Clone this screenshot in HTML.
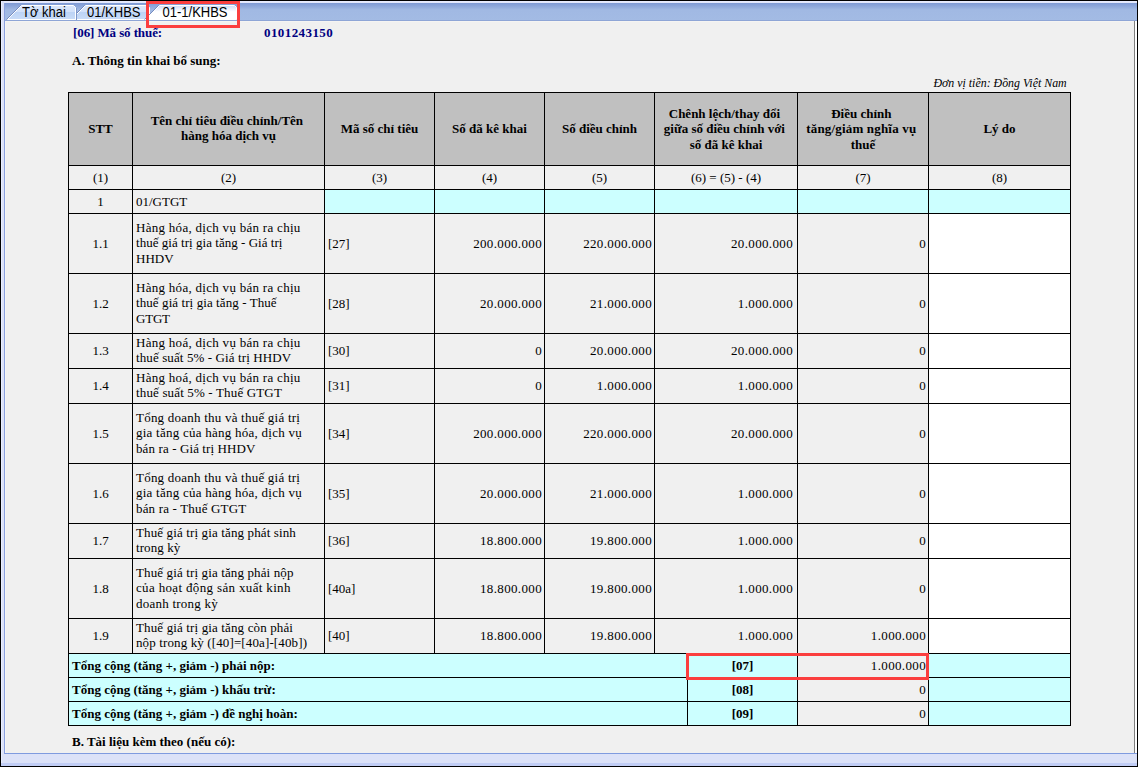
<!DOCTYPE html>
<html><head><meta charset="utf-8"><title>01-1/KHBS</title>
<style>
html,body{margin:0;padding:0}
body{width:1138px;height:767px;overflow:hidden;background:#000;position:relative;font-family:"Liberation Serif",serif;font-size:13px;color:#000}
#frame{position:absolute;left:1px;top:1px;width:1136px;height:765px;background:#dce2f8;overflow:hidden}
#tabbar{position:absolute;left:3px;top:0;width:1133px;height:20px;background:linear-gradient(#e8ecfd 0px,#dfe5fb 2px,#7f9ad4 2px,#8ca6da 5px,#a1b9e3 9px,#a3bbe4 20px)}
#content{position:absolute;left:3px;top:19px;width:1133px;height:732px;background:#f0f0f0;border-left:1px solid #8ba1e0;border-top:1px solid #8ea5d6;border-bottom:1px solid #7f9bdf}
#rline{position:absolute;left:1133px;top:20px;width:1px;height:732px;background:#808080}
#rwhite{position:absolute;left:1134px;top:20px;width:2px;height:732px;background:#fff}
#botband{position:absolute;left:0;top:762px;width:1136px;height:3px;background:#c1cdf5}
.tab{position:absolute;top:4px;height:16px;font-family:"Liberation Sans",sans-serif;font-size:13px;line-height:16px;color:#000}
.tab svg{position:absolute;left:0;top:0}
.tab span{position:absolute;top:0;white-space:nowrap;transform:scaleY(1.07);transform-origin:0 12.5px}
#tbl{position:absolute;left:68px;top:92px;width:1003px;height:634px;background:#000}
.c{position:absolute;display:flex;align-items:center;box-sizing:border-box;line-height:15px;overflow:hidden;white-space:nowrap}
.c span{display:block;width:100%}
.ln{display:block;font-style:normal}
.r .ln{letter-spacing:0.35px}
.l3{position:relative;top:1px}
.h{font-weight:bold;text-align:center;justify-content:center}
.m{text-align:center}
.l{text-align:left;padding-left:3px}
.h span,.ml span,.u span{position:relative;top:-1px}
.r.r6{padding-right:4px}
.r{text-align:right;padding-right:2px}
.b{font-weight:bold}
.t{position:absolute;white-space:nowrap;line-height:15px}
.red{position:absolute;border:3px solid #fb3e3e;box-sizing:border-box}
</style></head><body>
<div id="frame">
<div id="tabbar"></div><div style="position:absolute;left:3px;top:2px;width:1px;height:751px;background:#8ba1e0"></div>
<div id="content"></div>
<div style="position:absolute;left:0;top:0;width:1px;height:765px;background:#e8edff"></div><div style="position:absolute;left:4px;top:20px;width:1px;height:732px;background:#f6f5f3"></div><div style="position:absolute;left:4px;top:20px;width:1129px;height:1px;background:#f5f4f2"></div><div id="rline"></div><div id="rwhite"></div>
<div id="botband"></div>
<svg id="tabs" width="1138" height="22" viewBox="0 0 1138 22" style="position:absolute;left:-1px;top:-1px">
<defs>
<linearGradient id="gi" x1="0" y1="0" x2="0" y2="1" gradientUnits="objectBoundingBox">
<stop offset="0" stop-color="#dbe7fb"/><stop offset="0.46" stop-color="#d2e1fa"/><stop offset="0.46" stop-color="#bcd3f5"/><stop offset="1" stop-color="#c9dcf8"/>
</linearGradient>
<linearGradient id="ga" x1="0" y1="0" x2="0" y2="1" gradientUnits="objectBoundingBox">
<stop offset="0" stop-color="#cfdcf7"/><stop offset="0.45" stop-color="#ffffff"/><stop offset="1" stop-color="#ffffff"/>
</linearGradient>
</defs>
<!-- tab2 -->
<path d="M70.5,19.5 L84.5,5.5" stroke="#768cbf" stroke-width="1" fill="none"/>
<path d="M71.5,19.5 L85.5,5.5 L147.5,5.5 L149.5,7.5 L149.5,19.5 Z" fill="url(#gi)" stroke="#ffffff" stroke-width="1"/>
<!-- tab1 -->
<path d="M6.5,19.5 L20.5,5.5" stroke="#768cbf" stroke-width="1" fill="none"/>
<path d="M7.5,19.5 L21.5,5.5 L73.5,5.5 L75.5,7.5 L75.5,19.5 Z" fill="url(#gi)" stroke="#ffffff" stroke-width="1"/>
<path d="M76.5,8 L76.5,20" stroke="#7d96c9" stroke-width="1" fill="none"/>
<!-- tab3 active -->
<path d="M144.5,19.5 L158.5,5.5" stroke="#768cbf" stroke-width="1" fill="none"/>
<path d="M145.5,19.5 L159.5,5.5 L234.5,5.5 L236.5,7.5 L236.5,19.5 Z" fill="url(#ga)" stroke="#ffffff" stroke-width="1"/>
</svg>
<div class="tab" style="left:21px"><span>Tờ khai</span></div>
<div class="tab" style="left:86px"><span>01/KHBS</span></div>
<div class="tab" style="left:161.5px"><span>01-1/KHBS</span></div>
</div>
<div class="t b" style="left:73px;top:25px;color:#000080;font-weight:bold;letter-spacing:-0.1px">[06] Mã số thuế:</div>
<div class="t b" style="left:264px;top:25px;color:#000080;font-weight:bold;letter-spacing:0.42px">0101243150</div>
<div class="t b" style="left:72px;top:53px;font-weight:bold">A. Thông tin khai bổ sung:</div>
<div class="t" style="right:71px;top:75px;font-style:italic;transform:scaleX(0.915);transform-origin:100% 50%">Đơn vị tiền: Đồng Việt Nam</div>
<div class="t b" style="left:72px;top:734px;font-weight:bold">B. Tài liệu kèm theo (nếu có):</div>
<div id="tbl"></div>
<div class="c h" style="left:69px;top:93px;width:63px;height:72px;background:#c0c0c0"><span><i class="ln">STT</i></span></div>
<div class="c h" style="left:133px;top:93px;width:191px;height:72px;background:#c0c0c0"><span><i class="ln">Tên chỉ tiêu điều chỉnh/Tên&nbsp;</i><i class="ln">hàng hóa dịch vụ</i></span></div>
<div class="c h" style="left:325px;top:93px;width:109px;height:72px;background:#c0c0c0"><span><i class="ln">Mã số chỉ tiêu</i></span></div>
<div class="c h" style="left:435px;top:93px;width:109px;height:72px;background:#c0c0c0"><span><i class="ln">Số đã kê khai</i></span></div>
<div class="c h" style="left:545px;top:93px;width:109px;height:72px;background:#c0c0c0"><span><i class="ln">Số điều chỉnh</i></span></div>
<div class="c h" style="left:655px;top:93px;width:142px;height:72px;background:#c0c0c0"><span><i class="ln">Chênh lệch/thay đổi&nbsp;</i><i class="ln">giữa số điều chỉnh với&nbsp;</i><i class="ln l3">số đã kê khai</i></span></div>
<div class="c h" style="left:798px;top:93px;width:130px;height:72px;background:#c0c0c0"><span><i class="ln">Điều chỉnh&nbsp;</i><i class="ln" style="letter-spacing:0.18px">tăng/giảm nghĩa vụ&nbsp;</i><i class="ln l3">thuế</i></span></div>
<div class="c h" style="left:929px;top:93px;width:141px;height:72px;background:#c0c0c0"><span><i class="ln">Lý do</i></span></div>
<div class="c m" style="left:69px;top:166px;width:63px;height:23px;background:#f0f0f0"><span><i class="ln">(1)</i></span></div>
<div class="c m" style="left:133px;top:166px;width:191px;height:23px;background:#f0f0f0"><span><i class="ln">(2)</i></span></div>
<div class="c m" style="left:325px;top:166px;width:109px;height:23px;background:#f0f0f0"><span><i class="ln">(3)</i></span></div>
<div class="c m" style="left:435px;top:166px;width:109px;height:23px;background:#f0f0f0"><span><i class="ln">(4)</i></span></div>
<div class="c m" style="left:545px;top:166px;width:109px;height:23px;background:#f0f0f0"><span><i class="ln">(5)</i></span></div>
<div class="c m" style="left:655px;top:166px;width:142px;height:23px;background:#f0f0f0"><span><i class="ln">(6) = (5) - (4)</i></span></div>
<div class="c m" style="left:798px;top:166px;width:130px;height:23px;background:#f0f0f0"><span><i class="ln">(7)</i></span></div>
<div class="c m" style="left:929px;top:166px;width:141px;height:23px;background:#f0f0f0"><span><i class="ln">(8)</i></span></div>
<div class="c m" style="left:69px;top:190px;width:63px;height:23px;background:#f0f0f0"><span><i class="ln">1</i></span></div>
<div class="c l" style="left:133px;top:190px;width:191px;height:23px;background:#f0f0f0"><span><i class="ln">01/GTGT</i></span></div>
<div class="c " style="left:325px;top:190px;width:109px;height:23px;background:#ccffff"><span></span></div>
<div class="c " style="left:435px;top:190px;width:109px;height:23px;background:#ccffff"><span></span></div>
<div class="c " style="left:545px;top:190px;width:109px;height:23px;background:#ccffff"><span></span></div>
<div class="c " style="left:655px;top:190px;width:142px;height:23px;background:#ccffff"><span></span></div>
<div class="c " style="left:798px;top:190px;width:130px;height:23px;background:#ccffff"><span></span></div>
<div class="c " style="left:929px;top:190px;width:141px;height:23px;background:#ccffff"><span></span></div>
<div class="c m" style="left:69px;top:214px;width:63px;height:59px;background:#f0f0f0"><span><i class="ln">1.1</i></span></div>
<div class="c l ml" style="left:133px;top:214px;width:191px;height:59px;background:#f0f0f0"><span><i class="ln" style="letter-spacing:0.286px">Hàng hóa, dịch vụ bán ra chịu</i><i class="ln" style="letter-spacing:0.033px">thuế giá trị gia tăng - Giá trị</i><i class="ln l3" style="letter-spacing:0.035px">HHDV</i></span></div>
<div class="c l" style="left:325px;top:214px;width:109px;height:59px;background:#f0f0f0"><span><i class="ln">[27]</i></span></div>
<div class="c r" style="left:435px;top:214px;width:109px;height:59px;background:#f0f0f0"><span><i class="ln">200.000.000</i></span></div>
<div class="c r" style="left:545px;top:214px;width:109px;height:59px;background:#f0f0f0"><span><i class="ln">220.000.000</i></span></div>
<div class="c r r6" style="left:655px;top:214px;width:142px;height:59px;background:#f0f0f0"><span><i class="ln">20.000.000</i></span></div>
<div class="c r" style="left:798px;top:214px;width:130px;height:59px;background:#f0f0f0"><span><i class="ln">0</i></span></div>
<div class="c " style="left:929px;top:214px;width:141px;height:59px;background:#ffffff"><span></span></div>
<div class="c m" style="left:69px;top:274px;width:63px;height:59px;background:#f0f0f0"><span><i class="ln">1.2</i></span></div>
<div class="c l ml" style="left:133px;top:274px;width:191px;height:59px;background:#f0f0f0"><span><i class="ln" style="letter-spacing:0.286px">Hàng hóa, dịch vụ bán ra chịu</i><i class="ln" style="letter-spacing:0.083px">thuế giá trị gia tăng - Thuế</i><i class="ln l3" style="letter-spacing:-0.218px">GTGT</i></span></div>
<div class="c l" style="left:325px;top:274px;width:109px;height:59px;background:#f0f0f0"><span><i class="ln">[28]</i></span></div>
<div class="c r" style="left:435px;top:274px;width:109px;height:59px;background:#f0f0f0"><span><i class="ln">20.000.000</i></span></div>
<div class="c r" style="left:545px;top:274px;width:109px;height:59px;background:#f0f0f0"><span><i class="ln">21.000.000</i></span></div>
<div class="c r r6" style="left:655px;top:274px;width:142px;height:59px;background:#f0f0f0"><span><i class="ln">1.000.000</i></span></div>
<div class="c r" style="left:798px;top:274px;width:130px;height:59px;background:#f0f0f0"><span><i class="ln">0</i></span></div>
<div class="c " style="left:929px;top:274px;width:141px;height:59px;background:#ffffff"><span></span></div>
<div class="c m u" style="left:69px;top:334px;width:63px;height:34px;background:#f0f0f0"><span><i class="ln">1.3</i></span></div>
<div class="c l ml" style="left:133px;top:334px;width:191px;height:34px;background:#f0f0f0"><span><i class="ln" style="letter-spacing:0.286px">Hàng hoá, dịch vụ bán ra chịu</i><i class="ln" style="letter-spacing:0.109px">thuế suất 5% - Giá trị HHDV</i></span></div>
<div class="c l u" style="left:325px;top:334px;width:109px;height:34px;background:#f0f0f0"><span><i class="ln">[30]</i></span></div>
<div class="c r u" style="left:435px;top:334px;width:109px;height:34px;background:#f0f0f0"><span><i class="ln">0</i></span></div>
<div class="c r u" style="left:545px;top:334px;width:109px;height:34px;background:#f0f0f0"><span><i class="ln">20.000.000</i></span></div>
<div class="c r r6 u" style="left:655px;top:334px;width:142px;height:34px;background:#f0f0f0"><span><i class="ln">20.000.000</i></span></div>
<div class="c r u" style="left:798px;top:334px;width:130px;height:34px;background:#f0f0f0"><span><i class="ln">0</i></span></div>
<div class="c  u" style="left:929px;top:334px;width:141px;height:34px;background:#ffffff"><span></span></div>
<div class="c m u" style="left:69px;top:369px;width:63px;height:34px;background:#f0f0f0"><span><i class="ln">1.4</i></span></div>
<div class="c l ml" style="left:133px;top:369px;width:191px;height:34px;background:#f0f0f0"><span><i class="ln" style="letter-spacing:0.286px">Hàng hoá, dịch vụ bán ra chịu</i><i class="ln" style="letter-spacing:0.151px">thuế suất 5% - Thuế GTGT</i></span></div>
<div class="c l u" style="left:325px;top:369px;width:109px;height:34px;background:#f0f0f0"><span><i class="ln">[31]</i></span></div>
<div class="c r u" style="left:435px;top:369px;width:109px;height:34px;background:#f0f0f0"><span><i class="ln">0</i></span></div>
<div class="c r u" style="left:545px;top:369px;width:109px;height:34px;background:#f0f0f0"><span><i class="ln">1.000.000</i></span></div>
<div class="c r r6 u" style="left:655px;top:369px;width:142px;height:34px;background:#f0f0f0"><span><i class="ln">1.000.000</i></span></div>
<div class="c r u" style="left:798px;top:369px;width:130px;height:34px;background:#f0f0f0"><span><i class="ln">0</i></span></div>
<div class="c  u" style="left:929px;top:369px;width:141px;height:34px;background:#ffffff"><span></span></div>
<div class="c m" style="left:69px;top:404px;width:63px;height:59px;background:#f0f0f0"><span><i class="ln">1.5</i></span></div>
<div class="c l ml" style="left:133px;top:404px;width:191px;height:59px;background:#f0f0f0"><span><i class="ln" style="letter-spacing:0.223px">Tổng doanh thu và thuế giá trị</i><i class="ln" style="letter-spacing:0.247px">gia tăng của hàng hóa, dịch vụ</i><i class="ln l3" style="letter-spacing:0.108px">bán ra - Giá trị HHDV</i></span></div>
<div class="c l" style="left:325px;top:404px;width:109px;height:59px;background:#f0f0f0"><span><i class="ln">[34]</i></span></div>
<div class="c r" style="left:435px;top:404px;width:109px;height:59px;background:#f0f0f0"><span><i class="ln">200.000.000</i></span></div>
<div class="c r" style="left:545px;top:404px;width:109px;height:59px;background:#f0f0f0"><span><i class="ln">220.000.000</i></span></div>
<div class="c r r6" style="left:655px;top:404px;width:142px;height:59px;background:#f0f0f0"><span><i class="ln">20.000.000</i></span></div>
<div class="c r" style="left:798px;top:404px;width:130px;height:59px;background:#f0f0f0"><span><i class="ln">0</i></span></div>
<div class="c " style="left:929px;top:404px;width:141px;height:59px;background:#ffffff"><span></span></div>
<div class="c m" style="left:69px;top:464px;width:63px;height:59px;background:#f0f0f0"><span><i class="ln">1.6</i></span></div>
<div class="c l ml" style="left:133px;top:464px;width:191px;height:59px;background:#f0f0f0"><span><i class="ln" style="letter-spacing:0.223px">Tổng doanh thu và thuế giá trị</i><i class="ln" style="letter-spacing:0.247px">gia tăng của hàng hóa, dịch vụ</i><i class="ln l3" style="letter-spacing:0.17px">bán ra - Thuế GTGT</i></span></div>
<div class="c l" style="left:325px;top:464px;width:109px;height:59px;background:#f0f0f0"><span><i class="ln">[35]</i></span></div>
<div class="c r" style="left:435px;top:464px;width:109px;height:59px;background:#f0f0f0"><span><i class="ln">20.000.000</i></span></div>
<div class="c r" style="left:545px;top:464px;width:109px;height:59px;background:#f0f0f0"><span><i class="ln">21.000.000</i></span></div>
<div class="c r r6" style="left:655px;top:464px;width:142px;height:59px;background:#f0f0f0"><span><i class="ln">1.000.000</i></span></div>
<div class="c r" style="left:798px;top:464px;width:130px;height:59px;background:#f0f0f0"><span><i class="ln">0</i></span></div>
<div class="c " style="left:929px;top:464px;width:141px;height:59px;background:#ffffff"><span></span></div>
<div class="c m u" style="left:69px;top:524px;width:63px;height:34px;background:#f0f0f0"><span><i class="ln">1.7</i></span></div>
<div class="c l ml" style="left:133px;top:524px;width:191px;height:34px;background:#f0f0f0"><span><i class="ln" style="letter-spacing:0.13px">Thuế giá trị gia tăng phát sinh</i><i class="ln" style="letter-spacing:0.087px">trong kỳ</i></span></div>
<div class="c l u" style="left:325px;top:524px;width:109px;height:34px;background:#f0f0f0"><span><i class="ln">[36]</i></span></div>
<div class="c r u" style="left:435px;top:524px;width:109px;height:34px;background:#f0f0f0"><span><i class="ln">18.800.000</i></span></div>
<div class="c r u" style="left:545px;top:524px;width:109px;height:34px;background:#f0f0f0"><span><i class="ln">19.800.000</i></span></div>
<div class="c r r6 u" style="left:655px;top:524px;width:142px;height:34px;background:#f0f0f0"><span><i class="ln">1.000.000</i></span></div>
<div class="c r u" style="left:798px;top:524px;width:130px;height:34px;background:#f0f0f0"><span><i class="ln">0</i></span></div>
<div class="c  u" style="left:929px;top:524px;width:141px;height:34px;background:#ffffff"><span></span></div>
<div class="c m" style="left:69px;top:559px;width:63px;height:59px;background:#f0f0f0"><span><i class="ln">1.8</i></span></div>
<div class="c l ml" style="left:133px;top:559px;width:191px;height:59px;background:#f0f0f0"><span><i class="ln" style="letter-spacing:0.127px">Thuế giá trị gia tăng phải nộp</i><i class="ln" style="letter-spacing:0.344px">của hoạt động sản xuất kinh</i><i class="ln l3" style="letter-spacing:0.227px">doanh trong kỳ</i></span></div>
<div class="c l" style="left:325px;top:559px;width:109px;height:59px;background:#f0f0f0"><span><i class="ln">[40a]</i></span></div>
<div class="c r" style="left:435px;top:559px;width:109px;height:59px;background:#f0f0f0"><span><i class="ln">18.800.000</i></span></div>
<div class="c r" style="left:545px;top:559px;width:109px;height:59px;background:#f0f0f0"><span><i class="ln">19.800.000</i></span></div>
<div class="c r r6" style="left:655px;top:559px;width:142px;height:59px;background:#f0f0f0"><span><i class="ln">1.000.000</i></span></div>
<div class="c r" style="left:798px;top:559px;width:130px;height:59px;background:#f0f0f0"><span><i class="ln">0</i></span></div>
<div class="c " style="left:929px;top:559px;width:141px;height:59px;background:#ffffff"><span></span></div>
<div class="c m u" style="left:69px;top:619px;width:63px;height:34px;background:#f0f0f0"><span><i class="ln">1.9</i></span></div>
<div class="c l ml" style="left:133px;top:619px;width:191px;height:34px;background:#f0f0f0"><span><i class="ln" style="letter-spacing:0.135px">Thuế giá trị gia tăng còn phải</i><i class="ln" style="letter-spacing:0.124px">nộp trong kỳ ([40]=[40a]-[40b])</i></span></div>
<div class="c l u" style="left:325px;top:619px;width:109px;height:34px;background:#f0f0f0"><span><i class="ln">[40]</i></span></div>
<div class="c r u" style="left:435px;top:619px;width:109px;height:34px;background:#f0f0f0"><span><i class="ln">18.800.000</i></span></div>
<div class="c r u" style="left:545px;top:619px;width:109px;height:34px;background:#f0f0f0"><span><i class="ln">19.800.000</i></span></div>
<div class="c r r6 u" style="left:655px;top:619px;width:142px;height:34px;background:#f0f0f0"><span><i class="ln">1.000.000</i></span></div>
<div class="c r u" style="left:798px;top:619px;width:130px;height:34px;background:#f0f0f0"><span><i class="ln">1.000.000</i></span></div>
<div class="c  u" style="left:929px;top:619px;width:141px;height:34px;background:#ffffff"><span></span></div>
<div class="c l b" style="left:69px;top:654px;width:618px;height:23px;background:#ccffff"><span><i class="ln">Tổng cộng (tăng +, giảm -) phải nộp:</i></span></div>
<div class="c m b" style="left:688px;top:654px;width:109px;height:23px;background:#ccffff"><span><i class="ln">[07]</i></span></div>
<div class="c r" style="left:798px;top:654px;width:130px;height:23px;background:#f0f0f0"><span><i class="ln">1.000.000</i></span></div>
<div class="c " style="left:929px;top:654px;width:141px;height:23px;background:#ccffff"><span></span></div>
<div class="c l b" style="left:69px;top:678px;width:618px;height:23px;background:#ccffff"><span><i class="ln">Tổng cộng (tăng +, giảm -) khấu trừ:</i></span></div>
<div class="c m b" style="left:688px;top:678px;width:109px;height:23px;background:#ccffff"><span><i class="ln">[08]</i></span></div>
<div class="c r" style="left:798px;top:678px;width:130px;height:23px;background:#f0f0f0"><span><i class="ln">0</i></span></div>
<div class="c " style="left:929px;top:678px;width:141px;height:23px;background:#ccffff"><span></span></div>
<div class="c l b" style="left:69px;top:702px;width:618px;height:23px;background:#ccffff"><span><i class="ln">Tổng cộng (tăng +, giảm -) đề nghị hoàn:</i></span></div>
<div class="c m b" style="left:688px;top:702px;width:109px;height:23px;background:#ccffff"><span><i class="ln">[09]</i></span></div>
<div class="c r" style="left:798px;top:702px;width:130px;height:23px;background:#f0f0f0"><span><i class="ln">0</i></span></div>
<div class="c " style="left:929px;top:702px;width:141px;height:23px;background:#ccffff"><span></span></div>
<div class="red" style="left:686px;top:653px;width:243px;height:27px"></div>
<div class="red" style="left:146px;top:1px;width:94px;height:27px"></div>
</body></html>
